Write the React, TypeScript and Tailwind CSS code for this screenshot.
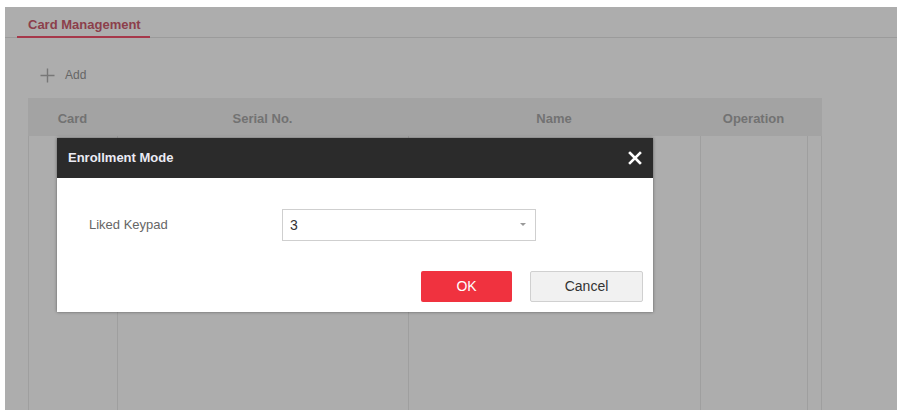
export default function App() {
  const cols = [
    { label: "Card", w: "w-[89px]" },
    { label: "Serial No.", w: "w-[291px]" },
    { label: "Name", w: "w-[292px]" },
    { label: "Operation", w: "w-[107px]" },
    { label: "", w: "w-[15px]" },
  ];

  return (
    <div className="w-[901px] h-[415px] bg-white pt-[7px] pl-[5px] pr-[4px] font-['Liberation_Sans',Arial,sans-serif]">
      <div className="relative h-[403px] bg-[#adadad] flex flex-col">
        {/* tabs */}
        <div className="flex pl-[12px] border-b border-[#9b9b9b]">
          <div className="h-[31px] pl-[11px] w-[133px] pt-[10px] leading-[15px] whitespace-nowrap border-b-2 border-[#a6384a] -mb-px text-[13px] font-bold text-[#8c3f4b]">
            Card Management
          </div>
        </div>

        {/* add */}
        <div className="flex items-center gap-[10px] pl-[35px] mt-[26px] h-[22px] text-[12px] text-[#666]">
          <svg width="15" height="15" viewBox="0 0 15 15">
            <path d="M7.5 0.5v14M0.5 7.5h14" stroke="#777" strokeWidth="1.4" fill="none" />
          </svg>
          <span>Add</span>
        </div>

        {/* table */}
        <div className="ml-[23px] w-[794px] mt-[12px] flex-1 flex flex-col">
          <div className="flex h-[38px] bg-[#a3a3a3]">
            {cols.map((c, i) => (
              <div
                key={i}
                className={`${c.w} flex items-center justify-center pt-[4px] text-[13px] font-bold text-[#727272]`}
              >
                {c.label}
              </div>
            ))}
          </div>
          <div className="flex flex-1">
            {cols.map((c, i) => (
              <div
                key={i}
                className={`${c.w} h-full border-l border-[#9f9f9f] ${i === cols.length - 1 ? "border-r" : ""}`}
              />
            ))}
          </div>
        </div>

        {/* modal */}
        <div className="absolute left-[52px] top-[131px] w-[596px] h-[174px] bg-white shadow-[0_0_3px_rgba(0,0,0,0.45)] flex flex-col">
          <div className="h-[40px] bg-[#2b2b2b] flex items-center justify-between pl-[11px] pr-[11px]">
            <span className="text-[13px] font-bold text-[#ebebf5]">Enrollment Mode</span>
            <svg width="14" height="14" viewBox="0 0 14 14">
              <path d="M2 2l10 10M12 2L2 12" stroke="#fff" strokeWidth="2.6" strokeLinecap="square" />
            </svg>
          </div>
          <div className="flex-1 relative">
            <div className="flex items-center mt-[31px] h-[32px]">
              <span className="ml-[32px] w-[193px] text-[13px] text-[#666]">Liked Keypad</span>
              <div className="w-[254px] h-[32px] border border-[#cfcfcf] flex items-center justify-between pl-[7px] pr-[9px]">
                <span className="text-[14px] text-[#333]">3</span>
                <svg width="6" height="4" viewBox="0 0 6 4">
                  <path d="M0 0h6L3 3z" fill="#999" />
                </svg>
              </div>
            </div>
            <div className="flex justify-end gap-[18px] pr-[10px] mt-[30px]">
              <button className="w-[91px] h-[31px] bg-[#f0323f] rounded-[2px] text-[14px] text-white">OK</button>
              <button className="w-[113px] h-[31px] bg-[#f1f1f1] border border-[#d0d0d0] rounded-[2px] text-[14px] text-[#333]">
                Cancel
              </button>
            </div>
          </div>
        </div>
      </div>
    </div>
  );
}
